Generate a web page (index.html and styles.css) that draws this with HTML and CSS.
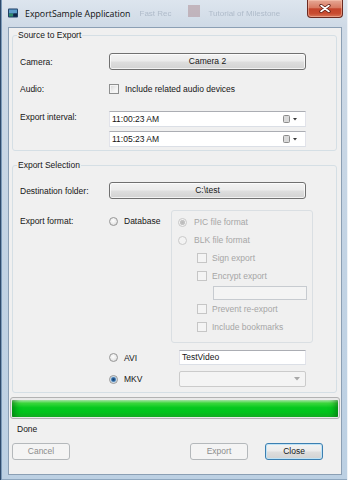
FILE: index.html
```html
<!DOCTYPE html>
<html lang="en">

<head>
    <meta charset="UTF-8">
    <meta name="viewport" content="width=device-width, initial-scale=1.0">
    <title>ExportSample Application</title>
    <link rel="stylesheet" href="styles.css">
</head>

<body>
    <div class="window">
        <div class="titlebar">
            <svg class="app-icon" viewBox="0 0 10 10">
                <rect x="0" y="0.5" width="10" height="9" rx="1" fill="#1f3f66" />
                <rect x="1" y="1.5" width="8" height="4" fill="#5d9cc9" />
                <rect x="1" y="5.5" width="4" height="3" fill="#2f8a6a" />
                <rect x="5.5" y="5.5" width="3.5" height="3" fill="#0f2745" />
            </svg>
            <span class="title">ExportSample Application</span>
            <span class="ghost">Fast Rec</span>
            <span class="ghost-square"></span>
            <span class="ghost">Tutorial of Milestone</span>
            <button class="close-btn" aria-label="Close">
                <svg viewBox="0 0 12 9" width="12" height="9">
                    <path d="M2 1.5 L10 7.5 M10 1.5 L2 7.5" stroke="#5a1a12" stroke-width="3.2" stroke-linecap="round" />
                    <path d="M2 1.5 L10 7.5 M10 1.5 L2 7.5" stroke="#ffffff" stroke-width="1.6" stroke-linecap="round" />
                </svg>
            </button>
        </div>

        <div class="client">
            <fieldset class="group group-source">
                <legend>Source to Export</legend>
                <div class="row row-camera">
                    <span class="label">Camera:</span>
                    <button class="btn btn-wide">Camera 2</button>
                </div>
                <div class="row row-audio">
                    <span class="label">Audio:</span>
                    <span class="check"></span>
                    <span class="opt-text">Include related audio devices</span>
                </div>
                <div class="row row-interval">
                    <span class="label">Export interval:</span>
                    <div class="dates">
                        <div class="datebox">
                            <span>11:00:23 AM</span>
                            <svg class="date-icon" viewBox="0 0 16 8" width="16" height="8">
                                <rect x="0.5" y="0.5" width="6" height="7" rx="1" fill="#d9d9d9" stroke="#8c8c8c" />
                                <path d="M10 3 L14 3 L12 5.5 Z" fill="#3a3a3a" />
                            </svg>
                        </div>
                        <div class="datebox">
                            <span>11:05:23 AM</span>
                            <svg class="date-icon" viewBox="0 0 16 8" width="16" height="8">
                                <rect x="0.5" y="0.5" width="6" height="7" rx="1" fill="#d9d9d9" stroke="#8c8c8c" />
                                <path d="M10 3 L14 3 L12 5.5 Z" fill="#3a3a3a" />
                            </svg>
                        </div>
                    </div>
                </div>
            </fieldset>

            <fieldset class="group group-export">
                <legend>Export Selection</legend>
                <div class="row row-dest">
                    <span class="label">Destination folder:</span>
                    <button class="btn btn-wide">C:\test</button>
                </div>
                <div class="row row-format">
                    <span class="label">Export format:</span>
                    <div class="opt opt-db">
                        <span class="radio"></span>
                        <span class="opt-text">Database</span>
                    </div>
                    <div class="panel">
                        <div class="prow">
                            <span class="radio disabled checked"></span>
                            <span class="opt-text dim wide-gap">PIC file format</span>
                        </div>
                        <div class="prow">
                            <span class="radio disabled"></span>
                            <span class="opt-text dim wide-gap">BLK file format</span>
                        </div>
                        <div class="prow sub">
                            <span class="check disabled"></span>
                            <span class="opt-text dim">Sign export</span>
                        </div>
                        <div class="prow sub">
                            <span class="check disabled"></span>
                            <span class="opt-text dim">Encrypt export</span>
                        </div>
                        <div class="textbox textbox-pass disabled"></div>
                        <div class="prow sub">
                            <span class="check disabled"></span>
                            <span class="opt-text dim">Prevent re-export</span>
                        </div>
                        <div class="prow sub">
                            <span class="check disabled"></span>
                            <span class="opt-text dim">Include bookmarks</span>
                        </div>
                    </div>
                </div>
                <div class="row row-avi">
                    <div class="opt opt-video">
                        <span class="radio"></span>
                        <span class="opt-text">AVI</span>
                    </div>
                    <div class="textbox textbox-video">TestVideo</div>
                </div>
                <div class="row row-mkv">
                    <div class="opt opt-video">
                        <span class="radio checked"></span>
                        <span class="opt-text">MKV</span>
                    </div>
                    <div class="combo">
                        <svg viewBox="0 0 6 4" width="6" height="4">
                            <path d="M0 0 L6 0 L3 3.5 Z" fill="#a8a8a8" />
                        </svg>
                    </div>
                </div>
            </fieldset>

            <div class="progress">
                <div class="progress-fill"></div>
            </div>

            <div class="status">Done</div>

            <div class="button-row">
                <button class="btn btn-action" disabled>Cancel</button>
                <button class="btn btn-action btn-export" disabled>Export</button>
                <button class="btn btn-action btn-default">Close</button>
            </div>
        </div>
    </div>
</body>

</html>
```

FILE: styles.css
```css
* {
    box-sizing: border-box;
}

body {
    margin: 0;
    width: 348px;
    height: 480px;
    overflow: hidden;
    font-family: "Liberation Sans", Arial, sans-serif;
    font-size: 8.5px;
    color: #161616;
    background: #3d5f82;
}

button {
    font: inherit;
    color: inherit;
}

.window {
    height: 480px;
    display: flex;
    flex-direction: column;
    background: linear-gradient(to bottom, #dde5ee 0, #cfdae6 26px, #c2d3e4 55%, #bcd0e3 100%);
    box-shadow: inset 1px 0 0 #2e4a6b, inset 2px 0 0 #7d9bb9, inset -1px 0 0 #eef3f8, inset 0 -1px 0 #8fa7bf;
}

/* title bar */

.titlebar {
    height: 27px;
    flex-shrink: 0;
    display: flex;
    align-items: flex-start;
}

.app-icon {
    width: 10px;
    height: 10px;
    margin: 8px 0 0 8px;
}

.title {
    margin: 8px 0 0 7px;
    font-family: "Open Sans", "Liberation Sans", sans-serif;
    font-size: 8.8px;
    line-height: 12px;
    color: #101010;
}

.ghost {
    margin: 8px 0 0 9px;
    font-size: 8px;
    line-height: 12px;
    color: #7f8fa2;
    opacity: 0.45;
    filter: blur(0.7px);
}

.ghost-square {
    width: 12px;
    height: 12px;
    margin: 5px 0 0 16px;
    background: #b3989f;
    opacity: 0.6;
    filter: blur(0.5px);
}

.close-btn {
    margin-left: auto;
    margin-right: 5px;
    width: 36px;
    height: 18px;
    padding: 0;
    border: 1px solid #6b2a21;
    border-top: none;
    border-radius: 0 0 4px 4px;
    background: linear-gradient(to bottom, #e6a895 0%, #d87a62 45%, #c4442b 52%, #c94d31 80%, #d8785c 100%);
    box-shadow: inset 0 0 0 1px rgba(255, 210, 190, 0.45);
    display: flex;
    align-items: center;
    justify-content: center;
}

/* client area */

.client {
    flex: 1;
    margin: 0 6px 5px 8px;
    padding-top: 2px;
    background: #f0f0f0;
    border: 1px solid #8b9fb4;
    display: flex;
    flex-direction: column;
}

.group {
    margin: 0 4px 0 3px;
    min-width: 0;
    border: 1px solid #d5dfe5;
    border-radius: 3px;
}

.group legend {
    margin-left: -3px;
    padding: 0 1px;
    line-height: 10px;
}

.group-source {
    padding: 13px 0 3px 7px;
}

.group-export {
    margin-top: 9px;
    padding: 12px 0 5px 7px;
}

.row {
    display: flex;
    align-items: center;
}

.label {
    width: 89px;
    flex-shrink: 0;
    line-height: 12px;
}

.row-camera,
.row-dest {
    height: 17px;
}

.row-audio {
    margin-top: 12px;
    height: 14px;
}

.row-interval {
    margin-top: 15px;
    align-items: flex-start;
}

.dates {
    display: flex;
    flex-direction: column;
    gap: 4px;
}

.row-format {
    margin-top: 11px;
    align-items: flex-start;
}

.row-format .label {
    padding-top: 5px;
}

.row-avi {
    margin-top: 7px;
    height: 15px;
    padding-left: 89px;
}

.row-mkv {
    margin-top: 6px;
    height: 16px;
    padding-left: 89px;
}

/* controls */

.btn {
    height: 17px;
    padding: 0;
    border: 1px solid #707070;
    border-radius: 3px;
    background: linear-gradient(to bottom, #f3f3f3 0%, #ebebeb 48%, #dedede 52%, #d2d2d2 100%);
    box-shadow: inset 0 0 0 1px rgba(255, 255, 255, 0.7);
    line-height: 15px;
    text-align: center;
}

.btn-wide {
    width: 197px;
}

.btn-action {
    width: 58px;
}

.btn:disabled {
    border-color: #b4b8bb;
    background: #f4f4f4;
    box-shadow: none;
    color: #8c8c8c;
}

.btn-export {
    margin-left: auto;
}

.btn-default {
    margin-left: 17px;
    border-color: #3c7fb1;
    box-shadow: inset 0 0 0 1px #bfe3f6;
}

.check {
    width: 10px;
    height: 10px;
    flex-shrink: 0;
    border: 1px solid #8e8f8f;
    background: linear-gradient(135deg, #d4d4d4 0%, #f0f0f0 55%, #ffffff 100%);
    box-shadow: inset 0 0 0 1px #f4f4f4;
}

.check.disabled {
    border-color: #c6c6c6;
    background: #f4f4f4;
    box-shadow: none;
}

.radio {
    width: 9px;
    height: 9px;
    flex-shrink: 0;
    border: 1px solid #979797;
    border-radius: 50%;
    background: radial-gradient(circle at 45% 40%, #ffffff 0, #e9e9e9 55%, #cfcfcf 100%);
}

.radio.checked {
    background: radial-gradient(circle, #163f6b 0, #2c64a0 1.6px, #8fb6d6 2.6px, #eef1f4 3.3px, #d2d2d2 100%);
}

.radio.disabled {
    border-color: #c9c9c9;
    background: #f3f3f3;
}

.radio.disabled.checked {
    background: radial-gradient(circle, #b9b9b9 0, #c6c6c6 2.2px, #f3f3f3 3px);
}

.opt {
    display: flex;
    align-items: center;
    flex-shrink: 0;
}

.opt-text {
    margin-left: 6px;
    line-height: 12px;
    white-space: nowrap;
}

.opt-text.wide-gap {
    margin-left: 7px;
}

.dim {
    color: #a6a6a6;
}

.opt-db {
    width: 62px;
    height: 12px;
    margin-top: 5px;
}

.opt-video {
    width: 70px;
}

.panel {
    width: 142px;
    height: 133px;
    padding: 2px 0 0 6px;
    border: 1px solid #dadfe3;
    border-radius: 3px;
}

.prow {
    height: 18px;
    display: flex;
    align-items: center;
}

.prow.sub {
    padding-left: 19px;
}

.prow.sub .opt-text {
    margin-left: 5px;
}

.textbox,
.datebox {
    background: #fff;
    border: 1px solid #dbdfe6;
    border-top-color: #abadb3;
    border-left-color: #e2e3ea;
    border-right-color: #e2e3ea;
}

.datebox {
    width: 197px;
    height: 16px;
    padding: 0 6px 0 2px;
    display: flex;
    align-items: center;
    justify-content: space-between;
    line-height: 12px;
}

.date-icon {
    flex-shrink: 0;
}

.textbox-pass {
    width: 94px;
    height: 14px;
    margin: 1px 0 0 35px;
}

.textbox.disabled {
    background: #f4f4f4;
    border-color: #c7cbd0;
}

.textbox-video {
    width: 127px;
    height: 15px;
    padding-left: 2px;
    line-height: 13px;
}

.combo {
    width: 127px;
    height: 16px;
    padding-right: 5px;
    border: 1px solid #cbcbcb;
    border-radius: 2px;
    background: #f4f4f4;
    display: flex;
    align-items: center;
    justify-content: flex-end;
}

/* progress and footer */

.progress {
    margin: 4px 1px 0 1px;
    height: 22px;
    padding: 2px 1px 1px;
    border: 1px solid #b2b2b2;
    border-radius: 3px;
    background: #e9e9e9;
}

.progress-fill {
    height: 100%;
    border-radius: 1px;
    background: linear-gradient(to bottom, #b5f1b5 0%, #3ed83e 18%, #06c81f 45%, #00c41c 70%, #12b423 100%);
    box-shadow: inset 7px 0 6px -4px rgba(0, 90, 10, 0.55), inset -7px 0 6px -4px rgba(0, 90, 10, 0.55);
}

.status {
    margin-top: 4px;
    padding-left: 8px;
    line-height: 12px;
}

.button-row {
    margin-top: 8px;
    padding: 0 18px 0 3px;
    display: flex;
}
```
